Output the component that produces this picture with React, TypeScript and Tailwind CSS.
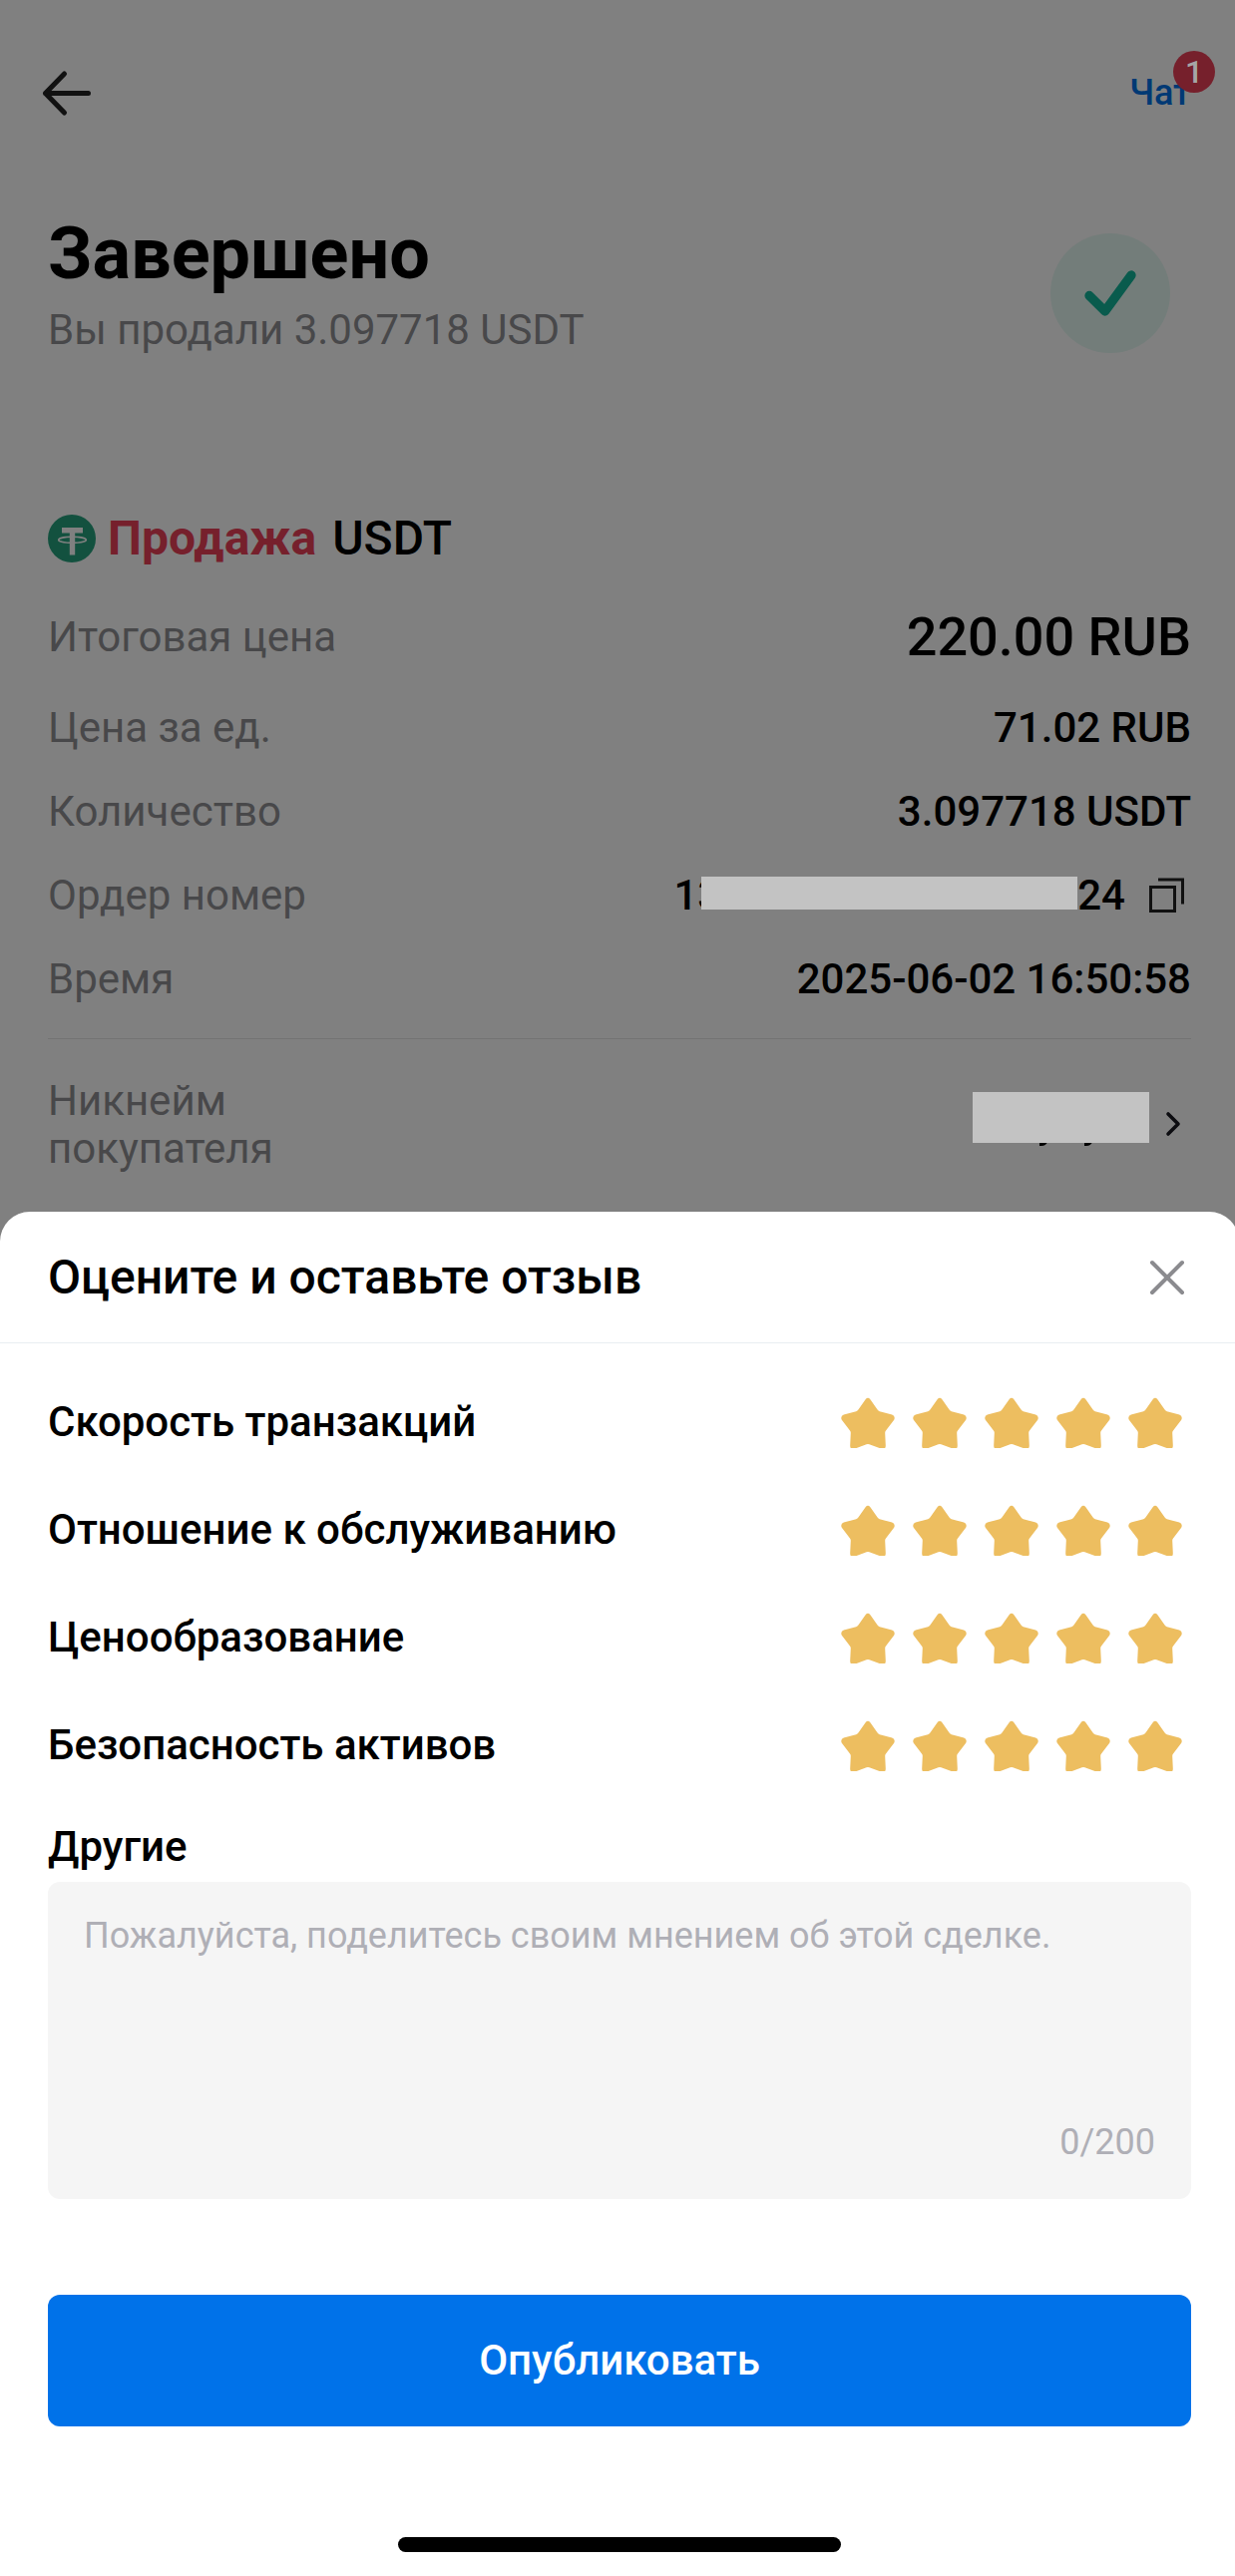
import React, { useState } from 'react';

const details = [
  { label: 'Цена за ед.', value: '71.02 RUB' },
  { label: 'Количество', value: '3.097718 USDT' },
];

const categories = ['Скорость транзакций', 'Отношение к обслуживанию', 'Ценообразование', 'Безопасность активов'];

const MAX_LENGTH = 200;

const StarIcon = () => (
  <svg width="54" height="51" viewBox="0 0 54 51" fill="currentColor" aria-hidden="true">
    <path d="M24.6 2.2Q27 -0.6 29.4 2.2L36.6 12.6Q37.4 13.8 38.8 14.2L51.2 17.6Q54.9 19.2 53.2 22.8L45 33.4Q44.2 34.4 44.2 35.8L44.8 48.6Q44.8 50.3 44.2 51H38.6L28.4 47.3Q27 46.8 25.6 47.3L15.6 51H9.8Q9.2 50.3 9.2 48.6L9.8 35.8Q9.8 34.4 9 33.4L0.8 22.8Q-0.9 19.2 2.8 17.6L15.2 14.2Q16.6 13.8 17.4 12.6Z" />
  </svg>
);

const TetherIcon = () => (
  <svg width="48" height="48" viewBox="0 0 48 48" aria-hidden="true">
    <circle cx="24" cy="24" r="24" fill="#13513f" />
    <path d="M14 13h21v5.500H14z" fill="#808080" />
    <path d="M21.800 18h5.400v22.500h-5.400z" fill="#808080" />
    <ellipse cx="24.500" cy="25.300" rx="13.800" ry="3" fill="none" stroke="#808080" strokeWidth="1.600" />
  </svg>
);

const App = () => {
  const [ratings, setRatings] = useState<number[]>([5, 5, 5, 5]);
  const [comment, setComment] = useState('');

  const handleRate = (row: number, value: number) => {
    setRatings(prev => prev.map((r, i) => (i === row ? value : r)));
  };

  return (
    <div className="overflow-hidden bg-[#808080] font-['Roboto',sans-serif] text-[42px] leading-[48px] text-black">
      <div className="-mr-1">
        <header className="flex h-[186px] items-center justify-between pl-10 pr-12">
          <button type="button" aria-label="Назад">
            <svg width="54" height="48" viewBox="0 0 54 48" fill="none" stroke="#111" strokeWidth="5" strokeLinecap="round" strokeLinejoin="round">
              <path d="M48.500 24.500H5.500M24.500 5L5.500 24.500L24.500 44" />
            </svg>
          </button>
          <a href="#chat" className="relative text-[36px] font-medium text-[#003974]">
            Чат
            <span className="absolute -right-6 -top-[18px] flex size-[42px] items-center justify-center rounded-full bg-[#76202c] text-[32px] text-[#a6a6a6]">
              1
            </span>
          </a>
        </header>

        <main className="px-12">
          <div className="flex items-end justify-between pt-[27px]">
            <div>
              <h1 className="text-[72px] font-bold leading-[84px]">Завершено</h1>
              <p className="mt-1 leading-[60px] text-[#48484a]">Вы продали 3.097718 USDT</p>
            </div>
            <svg className="mb-[7px] mr-[21px]" width="120" height="120" viewBox="0 0 120 120" fill="none" aria-hidden="true">
              <circle cx="60" cy="60" r="60" fill="#737d7a" />
              <path d="M39 62.500L54.700 78L81 42" stroke="#095b4d" strokeWidth="9.300" strokeLinecap="round" strokeLinejoin="round" />
            </svg>
          </div>

          <h2 className="mt-[149px] flex h-[60px] items-center text-[48px] font-medium">
            <TetherIcon />
            <span className="ml-3 font-bold text-[#76202c]">Продажа</span>
            <span className="ml-4">USDT</span>
          </h2>

          <dl className="mt-5 font-medium">
            <div className="flex h-[98px] items-center justify-between">
              <dt className="font-normal text-[#48484a]">Итоговая цена</dt>
              <dd className="text-[54px]">220.00 RUB</dd>
            </div>
            {details.map(item => (
              <div key={item.label} className="flex h-[84px] items-center justify-between">
                <dt className="font-normal text-[#48484a]">{item.label}</dt>
                <dd>{item.value}</dd>
              </div>
            ))}
            <div className="flex h-[84px] items-center justify-between">
              <dt className="font-normal text-[#48484a]">Ордер номер</dt>
              <dd className="flex items-center">
                <span>13</span>
                <span className="relative -ml-5 mb-[5px] h-[33px] w-[377px] bg-[#c3c3c3]" />
                <span>24</span>
                <button type="button" aria-label="Скопировать" className="ml-6">
                  <svg width="42" height="36" viewBox="0 0 42 36" fill="none" stroke="#111" strokeWidth="3">
                    <path d="M9 2H33.500V26.500" />
                    <rect x="1.500" y="9.500" width="24" height="24" />
                  </svg>
                </button>
              </dd>
            </div>
            <div className="flex h-[84px] items-center justify-between">
              <dt className="font-normal text-[#48484a]">Время</dt>
              <dd>2025-06-02 16:50:58</dd>
            </div>
            <div className="mt-[17px] flex items-center justify-between border-t border-[#737373] pb-[39px] pt-[38px]">
              <dt className="w-[300px] font-normal text-[#48484a]">Никнейм покупателя</dt>
              <dd>
                <a href="#buyer" aria-label="Профиль покупателя" className="flex items-center">
                  {/* hidden nickname, only the letter tails stick out */}
                  <svg width="177" height="66" viewBox="0 0 177 66" aria-hidden="true">
                    <path d="M67 50h8q-1.500 4-6 4h-2zM112 50h8q-1.500 4-6 4h-2z" fill="#000" />
                    <path d="M0 0h177v51H0z" fill="#c3c3c3" />
                  </svg>
                  <svg className="ml-3" width="30" height="30" viewBox="0 0 30 30" fill="none" stroke="#0c0c10" strokeWidth="3.600" strokeLinecap="round" strokeLinejoin="round">
                    <path d="M7 4L17 14L7 24" />
                  </svg>
                </a>
              </dd>
            </div>
          </dl>
        </main>

        <section className="rounded-t-[30px] bg-white pb-6">
          <div className="flex h-[132px] items-center justify-between border-b border-[#e9eef2] px-12">
            <h2 className="text-[48px] font-medium">Оцените и оставьте отзыв</h2>
            <button type="button" aria-label="Закрыть">
              <svg width="48" height="48" viewBox="0 0 48 48" fill="none" stroke="#8b8b8f" strokeWidth="4" strokeLinecap="round">
                <path d="M9 9L39 39M39 9L9 39" />
              </svg>
            </button>
          </div>

          <form className="px-12 pt-[25px]" onSubmit={e => e.preventDefault()}>
            {categories.map((category, row) => (
              <div key={category} className="flex h-[108px] items-center justify-between">
                <span className="font-medium">{category}</span>
                <div className="flex" role="group" aria-label={category}>
                  {[1, 2, 3, 4, 5].map(value => (
                    <button
                      key={value}
                      type="button"
                      aria-label={`${category}: ${value}`}
                      onClick={() => handleRate(row, value)}
                      className={value <= ratings[row] ? 'px-[9px] text-[#edbe60]' : 'px-[9px] text-[#e5e5e5]'}
                    >
                      <StarIcon />
                    </button>
                  ))}
                </div>
              </div>
            ))}

            <label htmlFor="comment" className="mt-[18px] block font-medium leading-[60px]">
              Другие
            </label>
            <div className="mt-[5px] flex h-[318px] flex-col rounded-xl bg-[#f5f5f5] px-9 pb-[33px] pt-[30px] text-[36px] text-[#afafb6]">
              <textarea
                id="comment"
                value={comment}
                maxLength={MAX_LENGTH}
                onChange={e => setComment(e.target.value)}
                placeholder="Пожалуйста, поделитесь своим мнением об этой сделке."
                className="w-full flex-1 resize-none bg-transparent text-black outline-none placeholder:text-[#afafb6]"
              />
              <span className="text-right">{comment.length}/{MAX_LENGTH}</span>
            </div>

            <button type="submit" className="mt-24 h-[132px] w-full rounded-xl bg-[#0072e9] font-medium text-white">
              Опубликовать
            </button>
          </form>

          <div className="mx-auto mt-[111px] h-[15px] w-[444px] rounded-full bg-black" />
        </section>
      </div>
    </div>
  );
};

export default App;
